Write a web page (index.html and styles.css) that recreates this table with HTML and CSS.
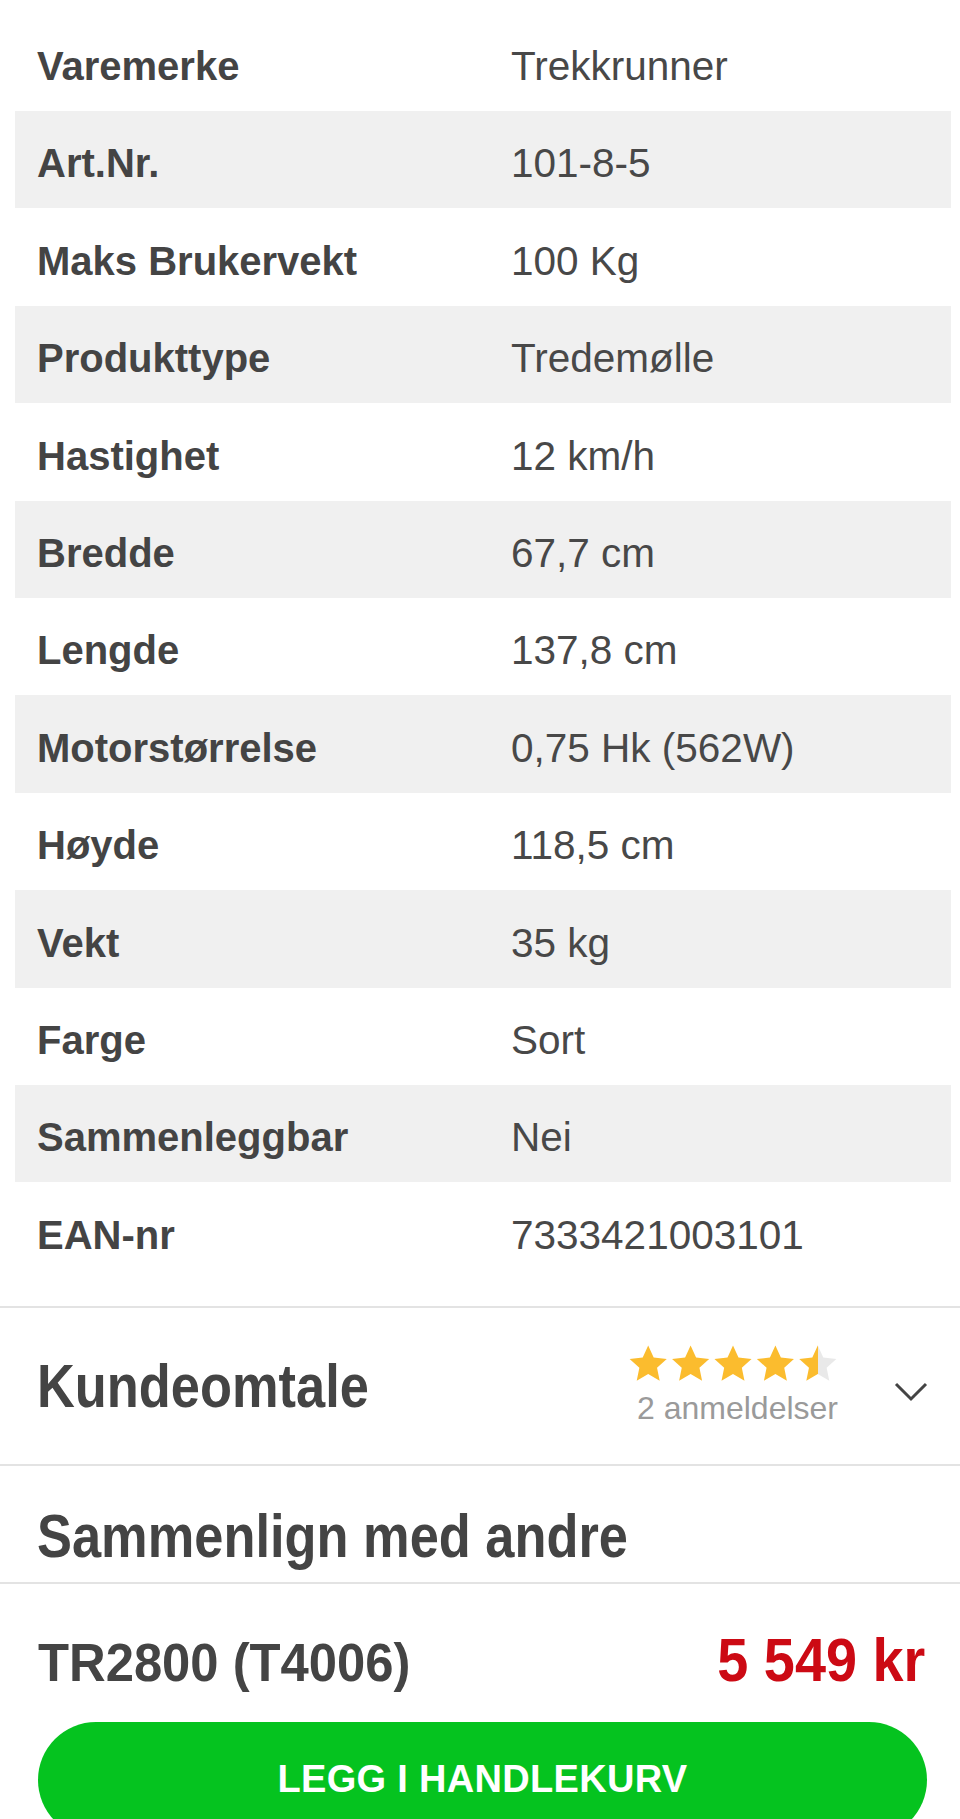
FILE: index.html
```html
<!DOCTYPE html>
<html lang="no">
<head>
<meta charset="utf-8">
<title>TR2800 (T4006)</title>
<link rel="stylesheet" href="styles.css">
</head>
<body>
<div class="page">
  <div class="specs">
    <div class="row"><div class="label">Varemerke</div><div class="value">Trekkrunner</div></div>
    <div class="row"><div class="label">Art.Nr.</div><div class="value">101-8-5</div></div>
    <div class="row"><div class="label">Maks Brukervekt</div><div class="value">100 Kg</div></div>
    <div class="row"><div class="label">Produkttype</div><div class="value">Tredemølle</div></div>
    <div class="row"><div class="label">Hastighet</div><div class="value">12 km/h</div></div>
    <div class="row"><div class="label">Bredde</div><div class="value">67,7 cm</div></div>
    <div class="row"><div class="label">Lengde</div><div class="value">137,8 cm</div></div>
    <div class="row"><div class="label">Motorstørrelse</div><div class="value">0,75 Hk (562W)</div></div>
    <div class="row"><div class="label">Høyde</div><div class="value">118,5 cm</div></div>
    <div class="row"><div class="label">Vekt</div><div class="value">35 kg</div></div>
    <div class="row"><div class="label">Farge</div><div class="value">Sort</div></div>
    <div class="row"><div class="label">Sammenleggbar</div><div class="value">Nei</div></div>
    <div class="row"><div class="label">EAN-nr</div><div class="value">7333421003101</div></div>
  </div>

  <div class="reviews">
    <h2 class="section-title"><span class="narrow">Kundeomtale</span></h2>
    <div class="reviews-right">
      <div class="rating">
        <svg class="stars" width="212" height="36" viewBox="0 1.2 120 20.4" preserveAspectRatio="none" aria-hidden="true">
          <defs>
            <linearGradient id="half" x1="0" x2="1" y1="0" y2="0">
              <stop offset="0.5" stop-color="#fbbc2e"/>
              <stop offset="0.5" stop-color="#e9e9e9"/>
            </linearGradient>
            <polygon id="star" points="12,1.5 15.1,8.3 22.5,9.1 17,14.1 18.5,21.4 12,17.7 5.5,21.4 7,14.1 1.5,9.1 8.9,8.3"/>
          </defs>
          <use href="#star" x="0" fill="#fbbc2e"/>
          <use href="#star" x="24" fill="#fbbc2e"/>
          <use href="#star" x="48" fill="#fbbc2e"/>
          <use href="#star" x="72" fill="#fbbc2e"/>
          <use href="#star" x="96" fill="url(#half)"/>
        </svg>
        <div class="count">2 anmeldelser</div>
      </div>
      <svg class="chevron" width="34" height="20" viewBox="0 0 34 20" aria-hidden="true">
        <polyline points="2,2 17,17 32,2" fill="none" stroke="#444" stroke-width="3"/>
      </svg>
    </div>
  </div>

  <div class="compare">
    <h2 class="section-title"><span class="narrow">Sammenlign med andre</span></h2>
  </div>

  <div class="buybar">
    <div class="price-row">
      <div class="product-name"><span class="narrow-name">TR2800 (T4006)</span></div>
      <div class="price"><span class="narrow-price">5 549 kr</span></div>
    </div>
    <button class="buy-btn">LEGG I HANDLEKURV</button>
  </div>
</div>
</body>
</html>
```

FILE: styles.css
```css
html, body {
  margin: 0;
  padding: 0;
  background: #ffffff;
}
html {
  height: 1819px;
  overflow: hidden;
}
.page {
  width: 960px;
  font-family: "Liberation Sans", Arial, sans-serif;
  color: #444444;
}
.specs {
  margin: 13.6px 9px 0 15px;
  display: flex;
  flex-direction: column;
}
.row {
  display: grid;
  grid-template-columns: 474px 1fr;
  height: 97.4px;
  box-sizing: border-box;
  padding: 29.5px 0 0 22px;
  font-size: 40px;
  line-height: 46px;
}
.row:nth-child(even) {
  background: #f0f0f0;
}
.label {
  font-weight: 700;
  color: #444444;
}
.value {
  font-weight: 400;
  font-size: 40.5px;
  color: #484848;
}
.reviews {
  margin-top: 26px;
  border-top: 2px solid #e3e3e3;
  border-bottom: 2px solid #e3e3e3;
  height: 156px;
  display: flex;
  align-items: center;
  justify-content: space-between;
  padding: 0 32px 0 37px;
}
.section-title {
  margin: 0;
  font-family: "Liberation Sans", Arial, sans-serif;
  font-weight: 700;
  font-size: 62px;
  line-height: 62px;
  color: #444444;
  white-space: nowrap;
}
.narrow {
  display: inline-block;
  transform: scaleX(0.845);
  transform-origin: left center;
}
.reviews-right {
  display: flex;
  align-items: center;
  gap: 56px;
}
.rating {
  display: flex;
  flex-direction: column;
  align-items: flex-end;
  margin-top: -1px;
}
.stars {
  display: block;
  margin-right: -1px;
}
.count {
  font-size: 32px;
  line-height: 36px;
  color: #9a9a9a;
  margin-top: 9px;
}
.chevron {
  display: block;
  margin-top: 12px;
}
.compare {
  height: 116px;
  box-sizing: border-box;
  padding: 39.5px 0 0 37px;
  overflow: hidden;
}
.buybar {
  border-top: 2px solid #e3e3e3;
  background: #ffffff;
}
.price-row {
  height: 138px;
  box-sizing: border-box;
  padding: 46.5px 35px 0 38px;
  display: flex;
  justify-content: space-between;
  align-items: baseline;
  white-space: nowrap;
}
.product-name {
  font-weight: 700;
  font-size: 54px;
  line-height: 60px;
  color: #444444;
}
.narrow-name {
  display: inline-block;
  transform: scaleX(0.94);
  transform-origin: left center;
}
.price {
  font-weight: 700;
  font-size: 61px;
  line-height: 60px;
  color: #cc0a14;
}
.narrow-price {
  display: inline-block;
  transform: scaleX(0.915);
  transform-origin: right center;
}
.buy-btn {
  display: block;
  margin: 0 33px 0 38px;
  width: calc(100% - 71px);
  height: 116px;
  border: none;
  border-radius: 58px;
  background: #05c31f;
  color: #ffffff;
  font-family: "Liberation Sans", Arial, sans-serif;
  font-weight: 700;
  font-size: 38px;
  letter-spacing: 0.3px;
  padding: 0;
}
```
